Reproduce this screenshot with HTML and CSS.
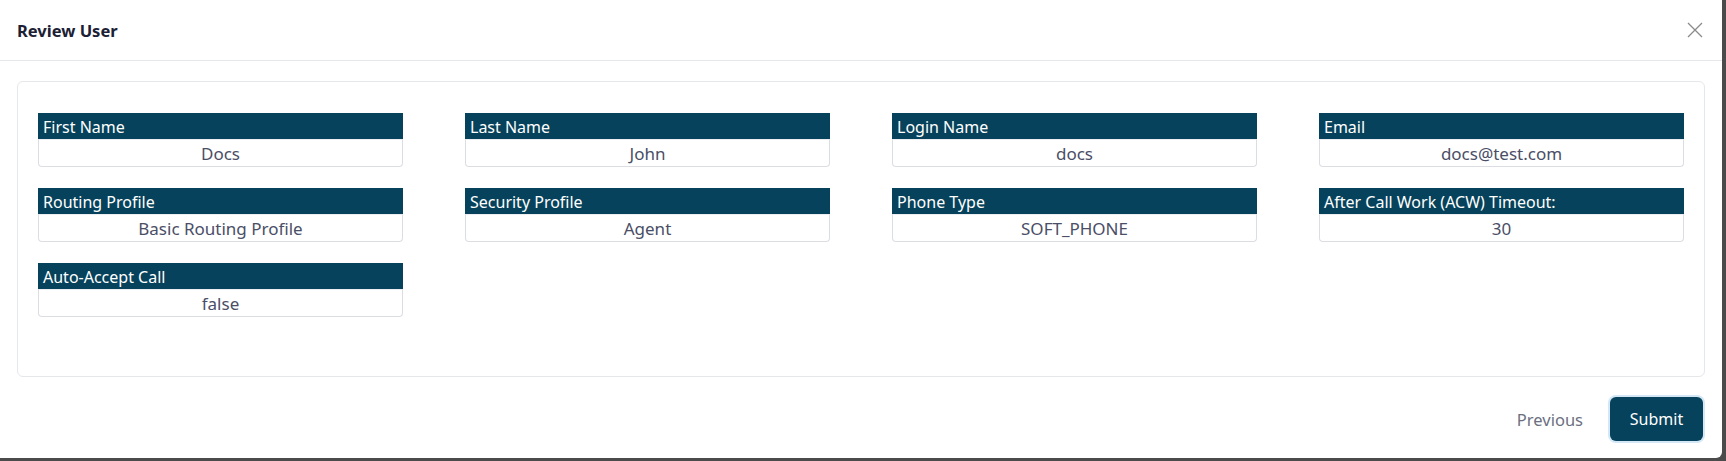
FILE: index.html
```html
<!DOCTYPE html>
<html lang="en">
<head>
<meta charset="utf-8">
<title>Review User</title>
<link rel="stylesheet" href="styles.css">
</head>
<body>
<div class="modal">
  <div class="modal-header">
    <h1 class="modal-title">Review User</h1>
    <button class="close-btn" aria-label="Close">
      <svg width="16" height="16" viewBox="0 0 16 16"><path d="M1 1L15 15M15 1L1 15" stroke="#8a8a8a" stroke-width="1.3" fill="none"/></svg>
    </button>
  </div>
  <div class="modal-body">
    <div class="card">
      <div class="grid">
        <div class="field"><div class="label">First Name</div><div class="value">Docs</div></div>
        <div class="field"><div class="label">Last Name</div><div class="value">John</div></div>
        <div class="field"><div class="label">Login Name</div><div class="value">docs</div></div>
        <div class="field"><div class="label">Email</div><div class="value">docs@test.com</div></div>
        <div class="field"><div class="label">Routing Profile</div><div class="value">Basic Routing Profile</div></div>
        <div class="field"><div class="label">Security Profile</div><div class="value">Agent</div></div>
        <div class="field"><div class="label">Phone Type</div><div class="value">SOFT_PHONE</div></div>
        <div class="field"><div class="label">After Call Work (ACW) Timeout:</div><div class="value">30</div></div>
        <div class="field"><div class="label">Auto-Accept Call</div><div class="value">false</div></div>
      </div>
    </div>
  </div>
  <div class="modal-footer">
    <button class="btn-prev">Previous</button>
    <button class="btn-submit">Submit</button>
  </div>
</div>
</body>
</html>
```
FILE: styles.css
```css
* { box-sizing: border-box; }
html, body { margin: 0; padding: 0; }
body {
  background: #4b4b4b;
  font-family: "Noto Sans", "Open Sans", sans-serif;
  width: 1726px;
  height: 461px;
  overflow: hidden;
}
.modal {
  width: 1722px;
  height: 458px;
  background: #fff;
  border-radius: 0 0 6px 0;
  display: flex;
  flex-direction: column;
}
.modal-header {
  height: 61px;
  border-bottom: 1px solid #e5e7eb;
  display: flex;
  align-items: center;
  justify-content: space-between;
  padding: 0 19px 0 17px;
}
.modal-title {
  margin: 0;
  font-size: 16.5px;
  font-weight: 700;
  color: #1b2033;
}
.close-btn {
  background: none;
  border: 0;
  padding: 0;
  width: 16px;
  height: 16px;
  display: flex;
}
.modal-body {
  padding: 20px 17px 0 17px;
}
.card {
  border: 1px solid #e5e7eb;
  border-radius: 6px;
  padding: 31px 20px 59px 20px;
}
.grid {
  display: grid;
  grid-template-columns: repeat(4, 365px);
  column-gap: 62px;
  row-gap: 21px;
}
.field { display: flex; flex-direction: column; }
.label {
  height: 26px;
  background: #06425b;
  color: #fff;
  font-size: 16px;
  line-height: 28px;
  padding-left: 5px;
  white-space: nowrap;
}
.value {
  height: 28px;
  padding-top: 2px;
  border: 1px solid #dcdde3;
  border-top-color: #eceef1;
  border-radius: 0 0 4px 4px;
  text-align: center;
  color: #4a4e66;
  font-size: 17px;
  line-height: 24px;
}
.modal-footer {
  display: flex;
  justify-content: flex-end;
  align-items: center;
  gap: 27px;
  padding: 20px 17px 0 0;
}
.btn-prev {
  background: none;
  border: 0;
  padding: 0;
  font-family: inherit;
  font-size: 16.5px;
  color: #6b7080;
}
.btn-submit {
  width: 93px;
  height: 44px;
  background: #06425b;
  color: #fff;
  border: 0;
  border-radius: 6px;
  font-family: inherit;
  font-size: 16px;
  box-shadow: 0 0 0 2px #d3e7f6;
  margin-right: 2px;
}
```
